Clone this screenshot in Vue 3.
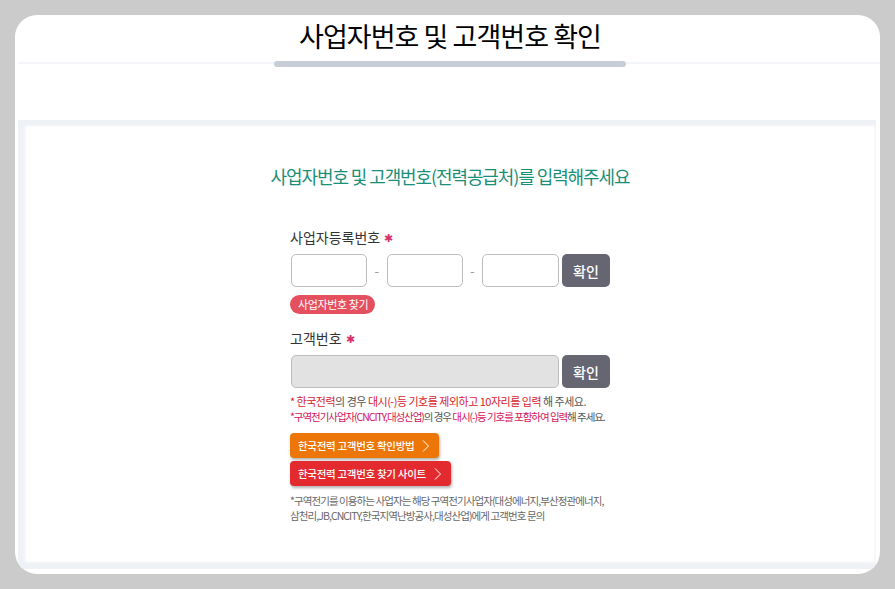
<script setup>
const bizInputs = [1, 2, 3]
</script>

<template>
  <div class="page">
    <div class="card">
      <header class="head">
        <h1>사업자번호 및 고객번호 확인</h1>
        <div class="bar"></div>
      </header>
      <section class="band">
        <div class="panel">
          <h2>사업자번호 및 고객번호(전력공급처)를 입력해주세요</h2>
          <div class="form">
            <div class="label">사업자등록번호 <span class="req">✱</span></div>
            <div class="row">
              <template v-for="n in bizInputs" :key="n">
                <input class="inp" type="text" />
                <span v-if="n < 3" class="dash">-</span>
              </template>
              <button class="ok">확인</button>
            </div>
            <span class="pill">사업자번호 찾기</span>

            <div class="label second">고객번호 <span class="req">✱</span></div>
            <div class="row">
              <input class="inp wide" type="text" disabled />
              <button class="ok">확인</button>
            </div>

            <p class="note one">
              <span class="red">* 한국전력</span>의 경우 <span class="red">대시(-)등 기호를 제외하고 10자리를 입력</span> 해 주세요.
            </p>
            <p class="note two">
              <span class="pink">*구역전기사업자(CNCITY,대성산업)</span>의 경우 <span class="pink">대시(-)등 기호를 포함하여 입력</span>해 주세요.
            </p>

            <a class="link orange">
              한국전력 고객번호 확인방법
              <svg width="8" height="14" viewBox="0 0 8 14"><path d="M1 1.5 L6.5 7 L1 12.5" fill="none" stroke="#fff" stroke-width="1" /></svg>
            </a>
            <a class="link crimson">
              한국전력 고객번호 찾기 사이트
              <svg width="8" height="14" viewBox="0 0 8 14"><path d="M1 1.5 L6.5 7 L1 12.5" fill="none" stroke="#fff" stroke-width="1" /></svg>
            </a>

            <p class="foot">*구역전기를 이용하는 사업자는 해당 구역전기사업자(대성에너지,부산정관에너지,<br />삼천리,JB,CNCITY,한국지역난방공사,대성산업)에게 고객번호 문의</p>
          </div>
        </div>
      </section>
    </div>
  </div>
</template>

<style scoped>
.page {
  width: 895px;
  height: 589px;
  background: #cbcbcb;
  padding: 15px;
  box-sizing: border-box;
  font-family: "Noto Sans CJK KR", "Noto Sans", sans-serif;
}
.card {
  width: 865px;
  height: 559px;
  background: #fff;
  border-radius: 22px;
  overflow: hidden;
  display: flex;
  flex-direction: column;
}
.head {
  height: 105px;
  padding-left: 5px;
  display: flex;
  flex-direction: column;
  align-items: center;
  position: relative;
}
.head::before {
  content: "";
  position: absolute;
  left: 3px;
  right: 0;
  top: 47px;
  height: 2px;
  background: #f4f5f8;
}
h1 {
  margin: 0;
  height: 46px;
  line-height: 42px;
  font-size: 27px;
  font-weight: 400;
  color: #000;
  letter-spacing: -0.95px;
}
.bar {
  position: relative;
  width: 352px;
  height: 6px;
  border-radius: 3px;
  background: #c7ced8;
}
.band {
  margin: 0 0 5px 3px;
  width: 858px;
  flex: 1;
  background: #eef1f6;
  padding: 7px 0 8px 8px;
  box-sizing: border-box;
  display: flex;
}
.panel {
  flex: 1;
  background: #fff;
  display: flex;
  flex-direction: column;
  align-items: center;
  margin-right: 2px;
  box-shadow: 0 0 3px 1px #fff;
}
h2 {
  margin: 36px 0 0;
  height: 26px;
  line-height: 26px;
  font-size: 18px;
  font-weight: 400;
  color: #1a8f78;
  letter-spacing: -1.1px;
}
.form {
  width: 320px;
  margin-top: 38px;
  display: flex;
  flex-direction: column;
  align-items: flex-start;
}
.label {
  font-size: 14px;
  line-height: 20px;
  height: 20px;
  color: #333;
  display: flex;
  align-items: center;
  gap: 4px;
}
.label.second {
  margin-top: 14px;
}
.req {
  color: #d9306a;
  font-size: 11px;
}
.row {
  margin-top: 7px;
  width: 320px;
  height: 33px;
  padding-left: 1px;
  box-sizing: border-box;
  display: flex;
  align-items: center;
}
.inp {
  width: 76px;
  height: 33px;
  padding: 0;
  box-sizing: border-box;
  border: 1px solid #bdbdbd;
  border-radius: 5px;
  background: #fff;
}
.inp:last-of-type {
  width: 77px;
}
.inp.wide {
  width: 268px;
  background: #e2e2e2;
}
.dash {
  width: 19.5px;
  text-align: center;
  color: #999;
  font-size: 13px;
}
.ok {
  margin-left: 3px;
  width: 48px;
  height: 33px;
  padding: 0;
  border: 0;
  border-radius: 5px;
  background: #666673;
  color: #fff;
  font-family: inherit;
  font-size: 14px;
  font-weight: 500;
}
.pill {
  margin-top: 8px;
  height: 19px;
  line-height: 19px;
  padding: 0 7px 0 8px;
  border-radius: 10px;
  background: #e5505f;
  color: #fff;
  font-size: 11px;
  letter-spacing: -0.4px;
}
.note {
  margin: 0;
  color: #555;
  font-size: 11px;
  white-space: nowrap;
  letter-spacing: -0.5px;
  line-height: 15px;
}
.note.one {
  margin-top: 6px;
}
.note.two {
  font-size: 10.5px;
  letter-spacing: -1.05px;
  line-height: 16px;
}
.red {
  color: #d61c2c;
}
.pink {
  color: #d4145a;
}
.link {
  display: flex;
  align-items: center;
  gap: 8px;
  height: 25px;
  padding: 0 9px 0 8px;
  border-radius: 4px;
  color: #fff;
  font-size: 10.5px;
  font-weight: 500;
  letter-spacing: -0.3px;
  box-shadow: 1px 2px 3px rgba(0, 0, 0, 0.3);
}
.orange {
  margin-top: 8px;
  background: #ec7607;
}
.crimson {
  margin-top: 3px;
  background: #e32b2f;
}
.foot {
  margin: 7px 0 0;
  width: 330px;
  color: #666;
  font-size: 10.5px;
  line-height: 15px;
  letter-spacing: -0.92px;
  white-space: nowrap;
}
</style>
